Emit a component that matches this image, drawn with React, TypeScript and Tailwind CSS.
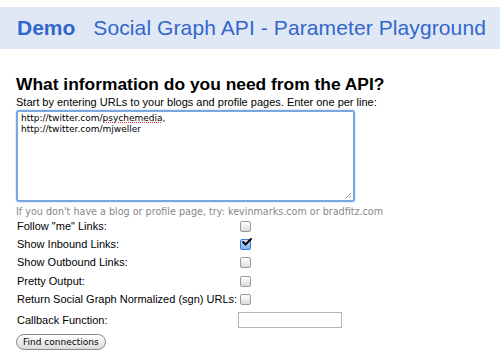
import { Check } from "lucide-react";

const OPTIONS = [
  { label: 'Follow "me" Links:', checked: false },
  { label: "Show Inbound Links:", checked: true },
  { label: "Show Outbound Links:", checked: false },
  { label: "Pretty Output:", checked: false },
  { label: "Return Social Graph Normalized (sgn) URLs:", checked: false },
];

function Box({ checked }: { checked: boolean }) {
  if (checked) {
    return (
      <span className="relative block h-[11px] w-[11px] rounded-[2px] border border-[#3d7bd9] bg-gradient-to-b from-[#cfe2fb] to-[#7fb0ee]">
        <Check className="absolute -top-[4px] left-[0px] h-[12px] w-[12px] text-black" strokeWidth={4} />
      </span>
    );
  }
  return (
    <span className="block h-[11px] w-[11px] rounded-[2px] border border-[#9a9a9a] bg-gradient-to-b from-white to-[#dcdcdc]" />
  );
}

export default function App() {
  return (
    <div className="h-[356px] w-[500px] overflow-hidden bg-white font-['Liberation_Sans',Arial,sans-serif] text-black">
      <div className="mt-[7px] flex h-[42px] items-center gap-[18px] bg-[#e0e8f5] pl-[17px] text-[21px] text-[#3366cc]">
        <span className="font-bold">Demo</span>
        <span className="tracking-[0.1px]">Social Graph API - Parameter Playground</span>
      </div>

      <div className="px-[16px] pt-[25px]">
        <h1 className="text-[17.4px] font-bold leading-[21px]">What information do you need from the API?</h1>
        <p className="text-[11px] leading-[14px]">
          Start by entering URLs to your blogs and profile pages. Enter one per line:
        </p>
        <div className="relative mt-[1px] h-[92px] w-[339px] rounded-[3px] border-[2px] border-[#7aa7e2] bg-white px-[3px] py-[1px] font-['DejaVu_Sans',Verdana,sans-serif] text-[9px] leading-[11px] shadow-[0_0_2px_#9ec0ee]">
          <div>
            http://twitter.com/
            <span className="underline decoration-dotted decoration-red-500">psychemedia</span>,
          </div>
          <div>http://twitter.com/mjweller</div>
          <svg className="absolute bottom-[1px] right-[1px] h-[8px] w-[8px]" viewBox="0 0 8 8">
            <path d="M7 2 L2 7 M7 5 L5 7" stroke="#999" strokeWidth="1" />
          </svg>
        </div>
        <p className="mt-[3px] font-['DejaVu_Sans',Verdana,sans-serif] text-[9.6px] leading-[13px] text-[#888]">
          If you don't have a blog or profile page, try: kevinmarks.com or bradfitz.com
        </p>

        <div className="-mt-[1px] grid grid-cols-[224px_auto] text-[11px]">
          {OPTIONS.map((o) => (
            <div key={o.label} className="col-span-2 grid h-[18.3px] grid-cols-subgrid items-center">
              <span className="pl-[1px] whitespace-nowrap">{o.label}</span>
              <Box checked={o.checked} />
            </div>
          ))}
          <div className="col-span-2 mt-[3px] grid h-[18px] grid-cols-subgrid items-center">
            <span className="pl-[1px]">Callback Function:</span>
            <input className="ml-[-2px] h-[16px] w-[104px] border border-[#b5b5b5] bg-white" />
          </div>
        </div>

        <button className="mt-[5px] block h-[16px] rounded-full border border-[#8a8a8a] bg-gradient-to-b from-white to-[#dcdcdc] px-[6px] font-['DejaVu_Sans',Verdana,sans-serif] text-[9px] leading-[14px]">
          Find connections
        </button>
      </div>
    </div>
  );
}
